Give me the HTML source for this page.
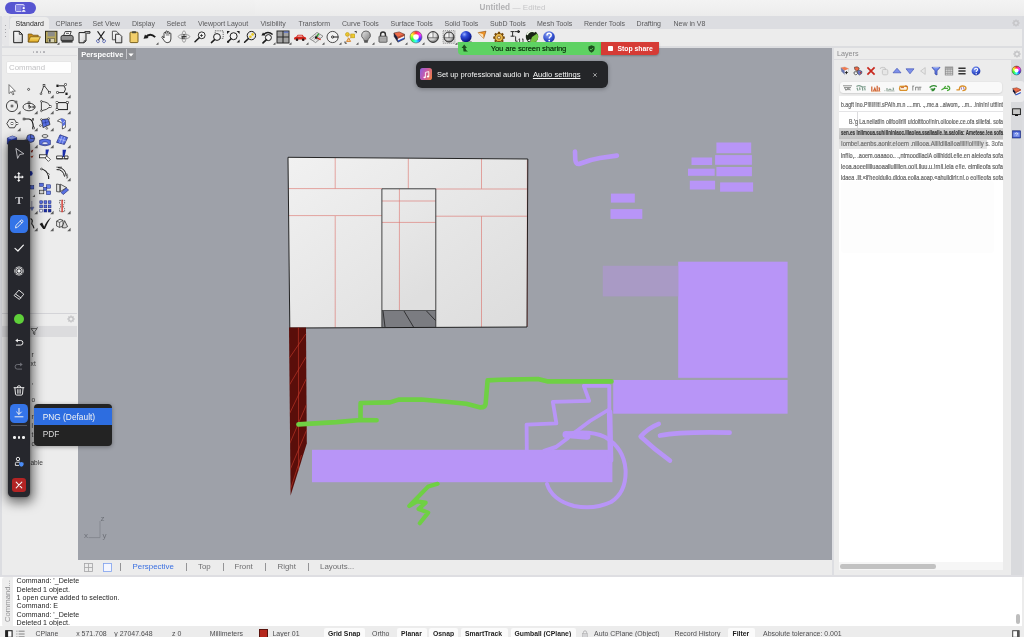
<!DOCTYPE html>
<html>
<head>
<meta charset="utf-8">
<title>Untitled</title>
<style>
html,body{margin:0;padding:0;}
body{width:1024px;height:637px;overflow:hidden;position:relative;background:#ececec;will-change:opacity;opacity:0.9999;font-family:"Liberation Sans",sans-serif;font-size:7px;color:#3a3a3a;}
.abs{position:absolute;}
.t{position:absolute;white-space:nowrap;line-height:10px;height:10px;}
svg{position:absolute;overflow:visible;}
#titlebar{left:0;top:0;width:1024px;height:16px;background:linear-gradient(#f3f3f3,#ececec);}
#tabrow{left:2px;top:16px;width:1022px;height:13px;background:#dcdde1;border-radius:4px 0 0 0;}
#toolrow{left:2px;top:29px;width:1022px;height:17px;background:#ececec;border-radius:0 0 0 4px;}
#sep1{left:0;top:46.2px;width:1024px;height:1.8px;background:#dcdde0;}
#vp{left:78px;top:48px;width:754px;height:512px;background:#9ea1a9;}
#vptabs{left:78px;top:560px;width:754px;height:15px;background:#ececec;}
#cmd{left:0;top:575px;width:1022px;height:52px;background:#fff;}
#status{left:0;top:627px;width:1024px;height:10px;background:#ececec;}
#leftp{left:2px;top:48px;width:75px;height:526px;background:#ececec;}
#rightp{left:834px;top:48px;width:176px;height:526px;background:#ececec;}
#rstrip{left:1010.5px;top:59.5px;width:13.5px;height:516px;background:#d9dadd;}
.tab{color:#5a5a5c;font-size:7px;top:18.6px;}
</style>
</head>
<body>
<div id="titlebar" class="abs"></div>
<div id="tabrow" class="abs"></div>
<div id="toolrow" class="abs"></div>
<div id="sep1" class="abs"></div>
<div id="leftp" class="abs"></div>
<div id="vp" class="abs"></div>
<div id="vptabs" class="abs"></div>
<div id="rightp" class="abs"></div>
<div id="rstrip" class="abs"></div>
<div id="cmd" class="abs"></div>
<div id="status" class="abs"></div>

<!-- TITLEBAR -->
<div class="abs" style="left:4.7px;top:2px;width:31.2px;height:12.1px;border-radius:6.05px;background:#5755d1;"></div>
<svg style="left:15px;top:4px" width="12" height="8" viewBox="0 0 12 8"><rect x="0.5" y="0.5" width="8.6" height="7" rx="1" fill="#817fe2" stroke="#dddcff" stroke-width="0.9"/><rect x="6.4" y="2.4" width="5" height="5.6" fill="#5755d1"/><circle cx="8.7" cy="4.1" r="1.2" fill="#fff"/><path d="M6.8 7.8 Q7 5.9 8.7 5.9 Q10.5 5.9 10.7 7.8Z" fill="#fff"/></svg>
<span class="t" style="left:479.6px;top:3.4px;font-size:8.2px;font-weight:bold;color:#b2b2b4;">Untitled</span>
<span class="t" style="left:512.6px;top:3.4px;font-size:8px;color:#c6c6c8;">— Edited</span>

<!-- TABS -->
<div class="abs" style="left:2px;top:16.4px;width:7.2px;height:29.8px;background:#e6e6e8;border-radius:4px 0 0 4px;"></div>
<div class="abs" style="left:5px;top:25px;width:1.2px;height:12.2px;background:repeating-linear-gradient(#a9a9ad 0 1.2px,transparent 1.2px 3.6px);"></div>
<div class="abs" style="left:10px;top:17px;width:39px;height:13px;background:#ececec;border-radius:4px 4px 0 0;"></div>
<span class="t tab" style="left:15.5px;color:#2a2a2a;">Standard</span>
<span class="t tab" style="left:55.5px;">CPlanes</span>
<span class="t tab" style="left:92.5px;">Set View</span>
<span class="t tab" style="left:132px;">Display</span>
<span class="t tab" style="left:166.5px;">Select</span>
<span class="t tab" style="left:198px;">Viewport Layout</span>
<span class="t tab" style="left:260.5px;">Visibility</span>
<span class="t tab" style="left:298.5px;">Transform</span>
<span class="t tab" style="left:342px;">Curve Tools</span>
<span class="t tab" style="left:390.5px;">Surface Tools</span>
<span class="t tab" style="left:444.5px;">Solid Tools</span>
<span class="t tab" style="left:490px;">SubD Tools</span>
<span class="t tab" style="left:537px;">Mesh Tools</span>
<span class="t tab" style="left:584px;">Render Tools</span>
<span class="t tab" style="left:636.5px;">Drafting</span>
<span class="t tab" style="left:673.5px;">New in V8</span>

<div class="abs" style="left:1022.2px;top:16px;width:1.8px;height:560px;background:#dbdce0;"></div>
<svg style="left:1012.4px;top:18.6px" width="8" height="8" viewBox="0 0 8 8"><path d="M7.60 4.00 L6.20 4.00" stroke="#c4c4c7" stroke-width="1.3"/><path d="M6.55 6.55 L5.56 5.56" stroke="#c4c4c7" stroke-width="1.3"/><path d="M4.00 7.60 L4.00 6.20" stroke="#c4c4c7" stroke-width="1.3"/><path d="M1.45 6.55 L2.44 5.56" stroke="#c4c4c7" stroke-width="1.3"/><path d="M0.40 4.00 L1.80 4.00" stroke="#c4c4c7" stroke-width="1.3"/><path d="M1.45 1.45 L2.44 2.44" stroke="#c4c4c7" stroke-width="1.3"/><path d="M4.00 0.40 L4.00 1.80" stroke="#c4c4c7" stroke-width="1.3"/><path d="M6.55 1.45 L5.56 2.44" stroke="#c4c4c7" stroke-width="1.3"/><circle cx="4" cy="4" r="2.1" fill="none" stroke="#c4c4c7" stroke-width="1.1"/></svg>
<div class="abs" style="left:832px;top:48px;width:2px;height:528px;background:#dddee2;"></div>
<div class="abs" style="left:0;top:574.6px;width:1024px;height:2.2px;background:#dedee2;"></div>
<div class="abs" style="left:0;top:16px;width:2px;height:560px;background:#dcdde1;"></div>
<svg width="0" height="0" style="position:absolute"><defs>
<linearGradient id="gpage" x1="0" y1="0" x2="1" y2="1"><stop offset="0" stop-color="#ffffff"/><stop offset="1" stop-color="#cfcfcf"/></linearGradient>
<linearGradient id="gfold" x1="0" y1="0" x2="0" y2="1"><stop offset="0" stop-color="#fbe27a"/><stop offset="1" stop-color="#e0a920"/></linearGradient>
<radialGradient id="gblue" cx="0.35" cy="0.3" r="0.8"><stop offset="0" stop-color="#9ab0ff"/><stop offset="0.3" stop-color="#2f4cd8"/><stop offset="0.75" stop-color="#0f1f9a"/><stop offset="1" stop-color="#040c48"/></radialGradient>
<radialGradient id="gwhite" cx="0.4" cy="0.35" r="0.8"><stop offset="0" stop-color="#ffffff"/><stop offset="0.5" stop-color="#d2d2d2"/><stop offset="1" stop-color="#3c3c3c"/></radialGradient>
<radialGradient id="ghelp" cx="0.4" cy="0.3" r="0.8"><stop offset="0" stop-color="#8aa2f2"/><stop offset="0.6" stop-color="#3350cf"/><stop offset="1" stop-color="#1a2c8a"/></radialGradient>
<linearGradient id="gbulb" x1="0" y1="0" x2="1" y2="1"><stop offset="0" stop-color="#e8e8e8"/><stop offset="1" stop-color="#7c7c7c"/></linearGradient>
</defs></svg>
<svg style="left:9.5px;top:29.3px" width="16" height="16" viewBox="0 0 16 16"><path d="M3.7 2.3 h5.6 l3 3 v8.4 h-8.6z" fill="url(#gpage)" stroke="#1c1c1c" stroke-width="1"/><path d="M9.3 2.3 v3 h3" fill="none" stroke="#1c1c1c" stroke-width="0.8"/></svg>
<svg style="left:26.1px;top:29.3px" width="16" height="16" viewBox="0 0 16 16"><path d="M2.2 5 h3.6 l1 1.2 h5.4 v6.8 h-10z" fill="#c9901a" stroke="#6b4a08" stroke-width="0.7"/><path d="M2.2 13 l2.2-5.2 h10 l-2.4 5.2z" fill="url(#gfold)" stroke="#6b4a08" stroke-width="0.7"/></svg>
<svg style="left:42.7px;top:29.3px" width="16" height="16" viewBox="0 0 16 16"><rect x="2.5" y="2.3" width="11.4" height="11.4" fill="#b8a85c" stroke="#2e2a18" stroke-width="1"/><rect x="4.6" y="2.8" width="7.2" height="4.6" fill="#8d8d88"/><rect x="5" y="9.4" width="6.4" height="4" fill="#d9d3b0" stroke="#5b5538" stroke-width="0.6"/><rect x="6" y="10.2" width="1.6" height="2.6" fill="#3a3a3a"/><path d="M16.5 13.2 v2.6 h-2.6z" fill="#555"/></svg>
<svg style="left:59.3px;top:29.3px" width="16" height="16" viewBox="0 0 16 16"><path d="M4.6 6.5 l1.6-4 h6 l-1.4 4z" fill="#fff" stroke="#1c1c1c" stroke-width="0.8"/><path d="M2 8.2 q0-1.8 2-1.8 h8 q2.2 0 2.2 1.8 v3.2 h-12.2z" fill="#8e8e8e" stroke="#1c1c1c" stroke-width="0.8"/><rect x="2.6" y="11.2" width="11" height="2.4" fill="#3c3c3c"/><rect x="7" y="3.8" width="3" height="1" fill="#555"/></svg>
<svg style="left:75.9px;top:29.3px" width="16" height="16" viewBox="0 0 16 16"><path d="M3 3.6 h7 v8.2 l-2 2 h-5z" fill="url(#gpage)" stroke="#1c1c1c" stroke-width="1"/><path d="M8 13.8 v-2 h2" fill="none" stroke="#1c1c1c" stroke-width="0.7"/><path d="M8.5 2.6 h5.5 v1.6 h-3.6" fill="#ddd" stroke="#1c1c1c" stroke-width="0.9"/></svg>
<svg style="left:92.5px;top:29.3px" width="16" height="16" viewBox="0 0 16 16"><path d="M4.8 2.6 L10.4 10.8 M11.2 2.6 L5.6 10.8" stroke="#1c1c1c" stroke-width="1.1" stroke-linecap="round"/><ellipse cx="4.9" cy="12.2" rx="1.3" ry="1.6" transform="rotate(-30 4.9 12.2)" fill="none" stroke="#4a5aa8" stroke-width="0.8"/><ellipse cx="11.1" cy="12.2" rx="1.3" ry="1.6" transform="rotate(30 11.1 12.2)" fill="none" stroke="#4a5aa8" stroke-width="0.8"/></svg>
<svg style="left:109.1px;top:29.3px" width="16" height="16" viewBox="0 0 16 16"><path d="M3.4 2.2 h4 l2 2 v6.6 h-6z" fill="url(#gpage)" stroke="#444" stroke-width="0.9"/><path d="M6.6 5.2 h4 l2.2 2.2 v6.4 h-6.2z" fill="url(#gpage)" stroke="#1c1c1c" stroke-width="0.9"/></svg>
<svg style="left:125.7px;top:29.3px" width="16" height="16" viewBox="0 0 16 16"><rect x="4" y="3.2" width="8" height="10.4" rx="0.8" fill="#f3cf6b" stroke="#6b5210" stroke-width="0.9"/><rect x="6" y="2.2" width="4" height="2" rx="0.5" fill="#4a4a3a"/></svg>
<svg style="left:142.3px;top:29.3px" width="16" height="16" viewBox="0 0 16 16"><path d="M3.4 8.6 Q8 3 13.2 8.2" fill="none" stroke="#1c1c1c" stroke-width="1.9"/><path d="M1.6 9.8 l5-0.8 l-3.6-3.6z" fill="#1c1c1c"/><path d="M16.5 13.2 v2.6 h-2.6z" fill="#555"/></svg>
<svg style="left:158.9px;top:29.3px" width="16" height="16" viewBox="0 0 16 16"><path d="M5 9 V4.4 q0-1 .9-1 q.8 0 .8 1 V3 q0-1 .9-1 t.9 1 v.6 q0-.9.9-.9 t.9.9 v1.2 q0-.8.8-.8 t.8.8 V10 q0 3.6-3 3.6 h-1 q-1.6 0-2.6-1.8 L3 8.6 q-.4-.9.4-1.2 q.7-.2 1.1.6z" fill="#f6f6f6" stroke="#1c1c1c" stroke-width="0.8"/><path d="M6.8 3.4 h3.6 v3.4 h-3.6z" fill="#8c8c8c" opacity="0.7"/></svg>
<svg style="left:175.5px;top:29.3px" width="16" height="16" viewBox="0 0 16 16"><ellipse cx="8" cy="7.6" rx="5.8" ry="2.2" fill="#f2f2f2" stroke="#8a8a8a" stroke-width="0.8"/><ellipse cx="8" cy="7.6" rx="2.1" ry="5.8" fill="none" stroke="#8a8a8a" stroke-width="0.8"/><path d="M8 5 v5.2 M5.6 7.6 h4.8" stroke="#1c1c1c" stroke-width="0.9"/><circle cx="6.4" cy="9" r="0.8" fill="#1c1c1c"/></svg>
<svg style="left:192.1px;top:29.3px" width="16" height="16" viewBox="0 0 16 16"><circle cx="9.7" cy="6.3" r="3.4" fill="#f4f4f4" stroke="#1c1c1c" stroke-width="0.9"/><path d="M7.2 8.8 L3 12.8" stroke="#1c1c1c" stroke-width="1.5" stroke-linecap="round"/><path d="M8 6.5 h3 M9.5 5 v3" stroke="#1c1c1c" stroke-width="0.7"/></svg>
<svg style="left:208.7px;top:29.3px" width="16" height="16" viewBox="0 0 16 16"><rect x="6.2" y="1.8" width="8" height="7.6" fill="none" stroke="#444" stroke-width="0.8" stroke-dasharray="1.2 1"/><circle cx="8" cy="8" r="3.4" fill="#f4f4f4" stroke="#1c1c1c" stroke-width="1"/><path d="M5.6 10.6 L2.4 13.6" stroke="#1c1c1c" stroke-width="1.5" stroke-linecap="round"/></svg>
<svg style="left:225.3px;top:29.3px" width="16" height="16" viewBox="0 0 16 16"><circle cx="8.6" cy="7.2" r="3.5" fill="#f4f4f4" stroke="#1c1c1c" stroke-width="1"/><path d="M6 9.8 L3.2 12.6" stroke="#1c1c1c" stroke-width="1.5" stroke-linecap="round"/><path d="M2 2 h3 l-3 3z M14.6 2 v3 l-3-3z M14.6 13.6 h-3 l3-3z M2 13.8 v-2.4 l2.4 2.4z" fill="#1c1c1c"/></svg>
<svg style="left:241.9px;top:29.3px" width="16" height="16" viewBox="0 0 16 16"><circle cx="9.4" cy="6.6" r="4.2" fill="#e9e9e9" stroke="#1c1c1c" stroke-width="1"/><path d="M6.4 9.6 L2.6 13.2" stroke="#1c1c1c" stroke-width="1.5" stroke-linecap="round"/><circle cx="8.4" cy="7.8" r="1.3" fill="#e9c91f"/><circle cx="10.6" cy="5.4" r="1.3" fill="#e9c91f"/></svg>
<svg style="left:258.5px;top:29.3px" width="16" height="16" viewBox="0 0 16 16"><circle cx="9.4" cy="8.6" r="3" fill="#f4f4f4" stroke="#1c1c1c" stroke-width="1"/><path d="M7.2 10.8 L4 13.8" stroke="#1c1c1c" stroke-width="1.7" stroke-linecap="round"/><path d="M4.6 5.4 Q9 1.4 13.6 5.6" fill="none" stroke="#1c1c1c" stroke-width="1.4"/><path d="M2.4 6.6 l4.2-.2 l-2.6-3z" fill="#1c1c1c"/><path d="M16.5 13.2 v2.6 h-2.6z" fill="#555"/></svg>
<svg style="left:275.1px;top:29.3px" width="16" height="16" viewBox="0 0 16 16"><rect x="2" y="2" width="12" height="12" fill="#a2a2a2" stroke="#2a2a2a" stroke-width="1"/><path d="M8 2 v12 M2 8 h12" stroke="#2a2a2a" stroke-width="1.1"/><rect x="8.8" y="2.6" width="4.6" height="1" fill="#4868d8"/><path d="M16.5 13.2 v2.6 h-2.6z" fill="#555"/></svg>
<svg style="left:291.7px;top:29.3px" width="16" height="16" viewBox="0 0 16 16"><path d="M2 9.6 q0-1.6 2.2-1.8 l1.6-2 h4.6 l1.6 2 q2.2.2 2.2 1.8 v1 h-12.2z" fill="#d3251c"/><path d="M6.2 6.4 h3.6 l1 1.4 h-5.6z" fill="#f2b8b3"/><circle cx="5" cy="10.8" r="1.3" fill="#2a1a1a"/><circle cx="11.2" cy="10.8" r="1.3" fill="#2a1a1a"/><path d="M16.5 13.2 v2.6 h-2.6z" fill="#555"/></svg>
<svg style="left:308.3px;top:29.3px" width="16" height="16" viewBox="0 0 16 16"><path d="M1.6 9.6 L9 3.4 L15 7.2 L7.6 13.6z" fill="#e6e6e6" stroke="#6a6a6a" stroke-width="0.7"/><path d="M4.2 7.4 l6.2 4 M6.6 5.4 l6.2 4 M5.2 11.6 l7.2-6.2 M3.2 10.6 l7.4-6.2" stroke="#8a8a8a" stroke-width="0.5"/><path d="M8.2 8.4 L12.6 10.8" stroke="#d0271d" stroke-width="1.3"/><path d="M8.2 8.4 L10.8 4.6" stroke="#2ea12e" stroke-width="1.3"/><rect x="7" y="7.4" width="2.2" height="2.2" fill="#1c1c1c"/><path d="M16.5 13.2 v2.6 h-2.6z" fill="#555"/></svg>
<svg style="left:324.9px;top:29.3px" width="16" height="16" viewBox="0 0 16 16"><circle cx="7.6" cy="8" r="5.6" fill="#f2f2f2" stroke="#3a3a3a" stroke-width="0.9"/><circle cx="7.6" cy="8" r="1.1" fill="none" stroke="#1c1c1c" stroke-width="0.9"/><path d="M8.8 8 h4.6" stroke="#1c1c1c" stroke-width="1"/><path d="M16.5 13.2 v2.6 h-2.6z" fill="#555"/></svg>
<svg style="left:341.5px;top:29.3px" width="16" height="16" viewBox="0 0 16 16"><circle cx="5.4" cy="5.4" r="1.9" fill="#f0cf2a" stroke="#b89410" stroke-width="0.6"/><rect x="8.8" y="5" width="3.8" height="3.8" fill="#f0cf2a" stroke="#b89410" stroke-width="0.6"/><path d="M6.6 9 l-2 3.4 h4z" fill="#f6d9b0" stroke="#d77a1a" stroke-width="0.9"/><path d="M5.4 5.4 L10.6 7 L6.6 10.6z" fill="none" stroke="#d8a64a" stroke-width="0.6"/><path d="M12.6 2.6 l1.8-.2 l-.2 1.8 M3 12.4 v1.8 h1.8" fill="none" stroke="#1c1c1c" stroke-width="0.8"/><path d="M16.5 13.2 v2.6 h-2.6z" fill="#555"/></svg>
<svg style="left:358.1px;top:29.3px" width="16" height="16" viewBox="0 0 16 16"><path d="M8 2 a4.3 4.3 0 0 1 2.6 7.8 q-.6.6-.6 1.8 h-4 q0-1.2-.6-1.8 A4.3 4.3 0 0 1 8 2z" fill="url(#gbulb)" stroke="#4a4a4a" stroke-width="0.8"/><rect x="6.2" y="11.6" width="3.6" height="2.2" rx="0.6" fill="#555"/><path d="M16.5 13.2 v2.6 h-2.6z" fill="#555"/></svg>
<svg style="left:374.7px;top:29.3px" width="16" height="16" viewBox="0 0 16 16"><path d="M5.6 7.4 v-2 a2.4 2.4 0 0 1 4.8 0 v2" fill="none" stroke="#2e2e2e" stroke-width="1.4"/><rect x="4" y="7.2" width="8" height="6" rx="0.6" fill="#b9b9b9" stroke="#3c3c3c" stroke-width="0.8"/><path d="M4.6 9.2 h6.8 M4.6 11 h6.8" stroke="#8a8a8a" stroke-width="0.6"/><path d="M16.5 13.2 v2.6 h-2.6z" fill="#555"/></svg>
<svg style="left:391.3px;top:29.3px" width="16" height="16" viewBox="0 0 16 16"><path d="M2.9 4 L6.9 8.4 L6.9 13.2 L3.2 7.5Z" fill="#1a1a3a"/><path d="M6.9 8.4 L13.5 5.3 L13.5 7 L6.9 10.1Z" fill="#d24a2c"/><path d="M6.9 10 L13.5 6.9 L13.5 8.6 L6.9 11.7Z" fill="#f4f4f4"/><path d="M6.9 11.6 L13.5 8.5 L13.5 10.1 L6.9 13.2Z" fill="#2b4fc4"/><path d="M2.9 4 L8.2 2.9 L13.5 5.3 L6.9 8.4Z" fill="#ee6a48" stroke="#4a1a10" stroke-width="0.5"/><path d="M2.9 4 L3.2 7.5 L6.9 13.2 L13.5 10.1 V5.3" fill="none" stroke="#222" stroke-width="0.5"/><path d="M16.5 13.2 v2.6 h-2.6z" fill="#555"/></svg>
<svg style="left:407.9px;top:29.3px" width="16" height="16" viewBox="0 0 16 16"><foreignObject x="2" y="2" width="12" height="12"><div style="width:12px;height:12px;border-radius:6px;background:conic-gradient(#f33,#f3f,#33f,#3ff,#3f3,#ff3,#f33);"></div></foreignObject><circle cx="8" cy="8" r="2.8" fill="#fff"/><circle cx="8" cy="8" r="6" fill="none" stroke="#444" stroke-width="0.5"/><path d="M16.5 13.2 v2.6 h-2.6z" fill="#555"/></svg>
<svg style="left:424.5px;top:29.3px" width="16" height="16" viewBox="0 0 16 16"><circle cx="8" cy="8" r="5.4" fill="url(#gwhite)" stroke="#1c1c1c" stroke-width="0.9"/><path d="M8 2.6 v6 M2.8 8.8 h10.4" stroke="#333" stroke-width="0.6"/></svg>
<svg style="left:441.1px;top:29.3px" width="16" height="16" viewBox="0 0 16 16"><rect x="2" y="1.6" width="12" height="12.8" fill="#d4d4d4" stroke="#6a6a6a" stroke-width="0.6" stroke-dasharray="1 1"/><circle cx="8" cy="8" r="5" fill="url(#gwhite)" stroke="#1c1c1c" stroke-width="0.9"/><path d="M8 3 v6 M3 8.8 h10" stroke="#333" stroke-width="0.6"/><path d="M16.5 13.2 v2.6 h-2.6z" fill="#555"/></svg>
<svg style="left:457.7px;top:29.3px" width="16" height="16" viewBox="0 0 16 16"><ellipse cx="9" cy="13" rx="5" ry="1.4" fill="#9a9a9a"/><circle cx="8" cy="7.6" r="5.6" fill="url(#gblue)"/></svg>
<svg style="left:474.3px;top:29.3px" width="16" height="16" viewBox="0 0 16 16"><path d="M4.2 3.6 L12 2.2 L9.6 9.4z" fill="#f0962a" stroke="#8a4a08" stroke-width="0.6"/><path d="M4.2 3.6 L9 5.2 L9.6 9.4" fill="#fbe2b8"/></svg>
<svg style="left:490.9px;top:29.3px" width="16" height="16" viewBox="0 0 16 16"><circle cx="8" cy="8.6" r="4.2" fill="#e7b54a" stroke="#6a4308" stroke-width="1"/><path d="M8 2.8 v2 M8 12.4 v2 M2.2 8.6 h2 M11.8 8.6 h2 M3.9 4.5 l1.4 1.4 M10.7 11.3 l1.4 1.4 M12.1 4.5 l-1.4 1.4 M5.3 11.3 l-1.4 1.4" stroke="#7a4d0a" stroke-width="2.2"/><circle cx="8" cy="8.6" r="3.4" fill="#e7b54a"/><circle cx="8" cy="8.6" r="1.5" fill="#f4ead0" stroke="#6a4308" stroke-width="0.7"/></svg>
<svg style="left:507.5px;top:29.3px" width="16" height="16" viewBox="0 0 16 16"><path d="M2.6 2.6 h4 M2.6 7.2 h4 M4.6 2.6 v4.6 M7 2.6 h5 M10 1.4 l2 1.2 l-2 1.2z M7.6 7.4 v4.8 h2" fill="none" stroke="#1c1c1c" stroke-width="0.9"/><path d="M10.6 10.4 l1-.6 v4 M14 10.4 l1-.6 v4 M12.6 13.6 h.6" stroke="#1c1c1c" stroke-width="0.8" fill="none"/></svg>
<svg style="left:524.1px;top:29.3px" width="16" height="16" viewBox="0 0 16 16"><circle cx="8" cy="8" r="6.2" fill="#182414"/><path d="M8 8 L13 4.4 A6.2 6.2 0 0 1 12 12.8 L6 13.6z" fill="#76c442"/><path d="M3 6 A5.4 5.4 0 0 1 11 3" fill="none" stroke="#eef6e8" stroke-width="1.6"/><path d="M3.4 11.8 l3-1.8 v2.6z" fill="#f4f4f4"/></svg>
<svg style="left:540.7px;top:29.3px" width="16" height="16" viewBox="0 0 16 16"><circle cx="8" cy="8" r="5.8" fill="url(#ghelp)"/><path d="M6 6.4 q0-2.2 2.1-2.2 q2.1 0 2.1 1.9 q0 1.2-1.1 1.8 q-.9.5-.9 1.5" fill="none" stroke="#fff" stroke-width="1.5"/><circle cx="8.2" cy="11.6" r="0.9" fill="#fff"/></svg>
<div class="abs" style="left:2px;top:48px;width:75px;height:7px;background:#ececec;border-bottom:1px solid #dedee0;border-radius:3px 3px 0 0;"></div>
<div class="abs" style="left:32.5px;top:51.1px;width:1.6px;height:1.6px;border-radius:0.5px;background:#b2b2b6;"></div>
<div class="abs" style="left:36.1px;top:51.1px;width:1.6px;height:1.6px;border-radius:0.5px;background:#b2b2b6;"></div>
<div class="abs" style="left:39.7px;top:51.1px;width:1.6px;height:1.6px;border-radius:0.5px;background:#b2b2b6;"></div>
<div class="abs" style="left:43.3px;top:51.1px;width:1.6px;height:1.6px;border-radius:0.5px;background:#b2b2b6;"></div>
<div class="abs" style="left:7px;top:62.2px;width:64px;height:10.7px;background:#fff;border-radius:0.8px;box-shadow:0 0 0 0.5px #e0e0e0;"></div>
<span class="t" style="left:9px;top:62.7px;font-size:7.8px;color:#c2c2c4;">Command</span>
<svg style="left:4.0px;top:81.7px" width="16" height="16" viewBox="0 0 16 16"><path d="M5 2.6 V11.6 L7.2 9.6 L8.8 12.8 L10 12.2 L8.4 9.2 H11.4Z" fill="#fff" stroke="#555" stroke-width="0.8"/></svg>
<svg style="left:21.0px;top:81.7px" width="16" height="16" viewBox="0 0 16 16"><circle cx="7.6" cy="7.4" r="1" fill="#fff" stroke="#1c1c1c" stroke-width="0.7"/></svg>
<svg style="left:36.8px;top:81.7px" width="16" height="16" viewBox="0 0 16 16"><path d="M4 11.6 L7 3.4 L12.4 10.2" fill="none" stroke="#1c1c1c" stroke-width="0.8"/><circle cx="4" cy="11.8" r="0.9" fill="#fff" stroke="#1c1c1c" stroke-width="0.6"/><rect x="6.1" y="2.5" width="1.8" height="1.8" fill="#fff" stroke="#1c1c1c" stroke-width="0.6"/><rect x="11.5" y="9.299999999999999" width="1.8" height="1.8" fill="#fff" stroke="#1c1c1c" stroke-width="0.6"/><path d="M16.6 12.8 v3.4 h-3.4z" fill="#5c5c5c"/></svg>
<svg style="left:54.0px;top:81.7px" width="16" height="16" viewBox="0 0 16 16"><path d="M3.6 3.8 H10 Q13 7 10 10.6 H3.6" fill="none" stroke="#1c1c1c" stroke-width="0.9"/><rect x="2.7" y="2.9" width="1.8" height="1.8" fill="#fff" stroke="#1c1c1c" stroke-width="0.6"/><rect x="2.7" y="9.7" width="1.8" height="1.8" fill="#fff" stroke="#1c1c1c" stroke-width="0.6"/><rect x="10.7" y="1.7000000000000002" width="1.8" height="1.8" fill="#fff" stroke="#1c1c1c" stroke-width="0.6"/><rect x="11.7" y="10.9" width="1.8" height="1.8" fill="#fff" stroke="#1c1c1c" stroke-width="0.6"/><path d="M16.6 12.8 v3.4 h-3.4z" fill="#5c5c5c"/></svg>
<svg style="left:4.0px;top:98.3px" width="16" height="16" viewBox="0 0 16 16"><circle cx="8" cy="8" r="5.6" fill="none" stroke="#1c1c1c" stroke-width="0.8"/><rect x="7.1" y="7.1" width="1.8" height="1.8" fill="#fff" stroke="#1c1c1c" stroke-width="0.6"/><rect x="11.1" y="3.1" width="1.8" height="1.8" fill="#fff" stroke="#1c1c1c" stroke-width="0.6"/><path d="M16.6 12.8 v3.4 h-3.4z" fill="#5c5c5c"/></svg>
<svg style="left:21.0px;top:98.3px" width="16" height="16" viewBox="0 0 16 16"><ellipse cx="8" cy="9" rx="6" ry="3.8" fill="none" stroke="#1c1c1c" stroke-width="0.8"/><path d="M8 4.6 V9 H12.6 M8 7 l2 2 l-2 1.6z" fill="none" stroke="#1c1c1c" stroke-width="0.6"/><rect x="7.1" y="3.9" width="1.8" height="1.8" fill="#fff" stroke="#1c1c1c" stroke-width="0.6"/><rect x="12.1" y="8.1" width="1.8" height="1.8" fill="#fff" stroke="#1c1c1c" stroke-width="0.6"/><path d="M16.6 12.8 v3.4 h-3.4z" fill="#5c5c5c"/></svg>
<svg style="left:36.8px;top:98.3px" width="16" height="16" viewBox="0 0 16 16"><path d="M4.4 3.4 Q12 4 13.2 8.6 Q10 12 4.4 12.8Z" fill="none" stroke="#1c1c1c" stroke-width="0.8"/><circle cx="4.4" cy="3.4" r="0.9" fill="#fff" stroke="#1c1c1c" stroke-width="0.6"/><circle cx="4.4" cy="12.8" r="0.9" fill="#fff" stroke="#1c1c1c" stroke-width="0.6"/><rect x="12.299999999999999" y="7.699999999999999" width="1.8" height="1.8" fill="#fff" stroke="#1c1c1c" stroke-width="0.6"/><path d="M16.6 12.8 v3.4 h-3.4z" fill="#5c5c5c"/></svg>
<svg style="left:54.0px;top:98.3px" width="16" height="16" viewBox="0 0 16 16"><rect x="3" y="4.6" width="10.4" height="7" fill="none" stroke="#1c1c1c" stroke-width="1"/><rect x="2.1" y="3.6999999999999997" width="1.8" height="1.8" fill="#fff" stroke="#1c1c1c" stroke-width="0.6"/><rect x="12.5" y="3.6999999999999997" width="1.8" height="1.8" fill="#fff" stroke="#1c1c1c" stroke-width="0.6"/><rect x="2.1" y="10.7" width="1.8" height="1.8" fill="#fff" stroke="#1c1c1c" stroke-width="0.6"/><path d="M16.6 12.8 v3.4 h-3.4z" fill="#5c5c5c"/></svg>
<svg style="left:4.0px;top:114.9px" width="16" height="16" viewBox="0 0 16 16"><path d="M2.8 8.6 L5.4 4.4 H10.4 L13 8.6 L10.4 12.8 H5.4Z" fill="none" stroke="#1c1c1c" stroke-width="0.8"/><rect x="7.1" y="7.699999999999999" width="1.8" height="1.8" fill="#fff" stroke="#1c1c1c" stroke-width="0.6"/><rect x="12.1" y="7.699999999999999" width="1.8" height="1.8" fill="#fff" stroke="#1c1c1c" stroke-width="0.6"/><path d="M16.6 12.8 v3.4 h-3.4z" fill="#5c5c5c"/></svg>
<svg style="left:21.0px;top:114.9px" width="16" height="16" viewBox="0 0 16 16"><path d="M3 4 H8 Q12.2 4.4 12.4 13" fill="none" stroke="#1c1c1c" stroke-width="1.2"/><rect x="2.1" y="3.1" width="1.8" height="1.8" fill="#fff" stroke="#1c1c1c" stroke-width="0.6"/><rect x="11.5" y="12.1" width="1.8" height="1.8" fill="#fff" stroke="#1c1c1c" stroke-width="0.6"/><rect x="11.3" y="3.7" width="1.4" height="1.4" fill="#fff" stroke="#1c1c1c" stroke-width="0.6"/><path d="M16.6 12.8 v3.4 h-3.4z" fill="#5c5c5c"/></svg>
<svg style="left:36.8px;top:114.9px" width="16" height="16" viewBox="0 0 16 16"><path d="M4.4 4.6 L11.4 3.8 L13 9.6 L6 12.6Z" fill="#5870e2" stroke="#1c1c1c" stroke-width="0.7"/><path d="M7.8 4.2 L9.4 11.2 M5 8.4 L12.2 6.6" stroke="#1a2a80" stroke-width="0.5"/><circle cx="4.4" cy="4.6" r="0.9" fill="#fff" stroke="#1c1c1c" stroke-width="0.6"/><circle cx="11.6" cy="3.6" r="0.9" fill="#fff" stroke="#1c1c1c" stroke-width="0.6"/><circle cx="3.4" cy="10.6" r="0.9" fill="#fff" stroke="#1c1c1c" stroke-width="0.6"/><circle cx="9.8" cy="13.4" r="0.9" fill="#fff" stroke="#1c1c1c" stroke-width="0.6"/><path d="M16.6 12.8 v3.4 h-3.4z" fill="#5c5c5c"/></svg>
<svg style="left:54.0px;top:114.9px" width="16" height="16" viewBox="0 0 16 16"><path d="M3.4 6 Q7 2.2 11.4 5.4 V12.4 L8.4 14 V8.4Q6 6.4 3.4 6Z" fill="#fff" stroke="#1c1c1c" stroke-width="0.7"/><path d="M8.4 8.4 Q10 6 11.4 5.4 Q9 3 6.4 3.8 Z" fill="#5870e2"/><path d="M8.4 8.6 L11.4 6 V9.6 L8.4 11.6Z" fill="#5870e2"/><path d="M16.6 12.8 v3.4 h-3.4z" fill="#5c5c5c"/></svg>
<svg style="left:4.0px;top:131.5px" width="16" height="16" viewBox="0 0 16 16"><path d="M3.4 6 L8.4 4 L12.6 5.6 V11.6 L7.6 13.8 L3.4 12Z" fill="#2a3fb8" stroke="#0d1660" stroke-width="0.6"/><path d="M3.4 6 L8.4 4 L12.6 5.6 L7.6 7.6Z" fill="#8fa0f0"/><path d="M16.6 12.8 v3.4 h-3.4z" fill="#5c5c5c"/></svg>
<svg style="left:21.0px;top:131.5px" width="16" height="16" viewBox="0 0 16 16"><circle cx="9.6" cy="6.4" r="4" fill="#5870e2" stroke="#1c1c1c" stroke-width="0.6"/><circle cx="5" cy="10.4" r="2.6" fill="#5870e2" stroke="#1c1c1c" stroke-width="0.6"/><path d="M9.6 2.4 V6.6 H13.6" stroke="#111" stroke-width="0.5" fill="none"/><path d="M16.6 12.8 v3.4 h-3.4z" fill="#5c5c5c"/></svg>
<svg style="left:36.8px;top:131.5px" width="16" height="16" viewBox="0 0 16 16"><path d="M2.6 8.2 Q8 5.6 13.4 8.2 V12.6 Q8 15 2.6 12.6Z" fill="#5870e2" stroke="#16206a" stroke-width="0.6"/><ellipse cx="8" cy="11.2" rx="3" ry="1.3" fill="#e8ecff" stroke="#16206a" stroke-width="0.5"/><ellipse cx="8" cy="4" rx="3" ry="1.4" fill="#f4f4f4" stroke="#1c1c1c" stroke-width="0.7"/><path d="M16.6 12.8 v3.4 h-3.4z" fill="#5c5c5c"/></svg>
<svg style="left:54.0px;top:131.5px" width="16" height="16" viewBox="0 0 16 16"><path d="M6 2.8 L13.6 5.6 L10.4 12.4 L2.6 10.4Z" fill="#5870e2" stroke="#16206a" stroke-width="0.7"/><path d="M4.4 6.8 L12 9 M8.2 3.8 L5.6 11 M10.8 4.8 L8.2 11.8" stroke="#c8d0ff" stroke-width="0.6"/><path d="M16.6 12.8 v3.4 h-3.4z" fill="#5c5c5c"/></svg>
<svg style="left:36.8px;top:148.1px" width="16" height="16" viewBox="0 0 16 16"><path d="M8.6 1.6 H12 L10 8.4 H8.6Z" fill="#1b2ea8"/><rect x="2.4" y="6.8" width="7.4" height="3" fill="#fff" stroke="#1c1c1c" stroke-width="0.8"/><path d="M9.6 8 L13.4 11.4 L11.4 13.4 L8.2 10Z" fill="#fff" stroke="#1c1c1c" stroke-width="0.7"/></svg>
<svg style="left:54.0px;top:148.1px" width="16" height="16" viewBox="0 0 16 16"><path d="M8.6 1.8 H12.2 L10.4 9 H8.6Z" fill="#1b2ea8"/><path d="M2.6 8 H8.4 V10.8 H2.6Z M10.6 8 H14 V10.8 H10.6Z" fill="#fff" stroke="#1c1c1c" stroke-width="0.8"/><path d="M2.6 10.8 H14" stroke="#1c1c1c" stroke-width="0.8"/></svg>
<svg style="left:36.8px;top:164.7px" width="16" height="16" viewBox="0 0 16 16"><path d="M3.4 4 Q10 4.4 11.6 11.6" fill="none" stroke="#1c1c1c" stroke-width="1.1"/><circle cx="4.6" cy="4" r="0.9" fill="#fff" stroke="#1c1c1c" stroke-width="0.6"/><circle cx="11.4" cy="9.4" r="0.9" fill="#fff" stroke="#1c1c1c" stroke-width="0.6"/><path d="M11.6 11 v3" stroke="#1c1c1c" stroke-width="1.2"/></svg>
<svg style="left:54.0px;top:164.7px" width="16" height="16" viewBox="0 0 16 16"><path d="M2.6 4.6 Q9 4 10.6 11.6 M4 2.6 Q11.4 2.6 12.4 11.4" fill="none" stroke="#1c1c1c" stroke-width="1"/><path d="M2.4 2.2 H8" stroke="#1c1c1c" stroke-width="0.7"/><path d="M12.8 8.4 Q14 10 13.6 13 H12" fill="none" stroke="#333" stroke-width="0.6"/><path d="M16.6 12.8 v3.4 h-3.4z" fill="#5c5c5c"/></svg>
<svg style="left:36.8px;top:181.3px" width="16" height="16" viewBox="0 0 16 16"><rect x="2.6" y="2.2" width="3.8" height="3.2" fill="#5870e2" stroke="#16206a" stroke-width="0.5"/><rect x="9.4" y="3.8" width="4.2" height="3.4" fill="#6a84ee" stroke="#16206a" stroke-width="0.5"/><rect x="6.6" y="6.4" width="3.2" height="2.8" fill="#5870e2" stroke="#16206a" stroke-width="0.5"/><rect x="2.6" y="9.2" width="4.2" height="3.6" fill="#d8d8d8" stroke="#1c1c1c" stroke-width="0.6"/><rect x="9.4" y="10" width="4.2" height="3.6" fill="#6a84ee" stroke="#16206a" stroke-width="0.5"/></svg>
<svg style="left:54.0px;top:181.3px" width="16" height="16" viewBox="0 0 16 16"><path d="M2.6 3 L5.8 3.6 V11 L2.6 10.6Z" fill="#e4e4e4" stroke="#1c1c1c" stroke-width="0.7"/><path d="M6.4 3.2 L12.6 6.6 L6.4 10.6Z" fill="#e4e4e4" stroke="#1c1c1c" stroke-width="0.7"/><path d="M12.2 7 L14.6 9 L9.2 13.6 L7 11.4Z" fill="#5870e2" stroke="#16206a" stroke-width="0.6"/></svg>
<svg style="left:36.8px;top:197.9px" width="16" height="16" viewBox="0 0 16 16"><rect x="2.8" y="2.8" width="2.8" height="2.8" fill="#5870e2" stroke="#16206a" stroke-width="0.5"/><rect x="7.0" y="2.8" width="2.8" height="2.8" fill="#5870e2" stroke="#16206a" stroke-width="0.5"/><rect x="11.2" y="2.8" width="2.8" height="2.8" fill="#5870e2" stroke="#16206a" stroke-width="0.5"/><rect x="2.8" y="7.0" width="2.8" height="2.8" fill="#5870e2" stroke="#16206a" stroke-width="0.5"/><rect x="7.0" y="7.0" width="2.8" height="2.8" fill="#5870e2" stroke="#16206a" stroke-width="0.5"/><rect x="11.2" y="7.0" width="2.8" height="2.8" fill="#5870e2" stroke="#16206a" stroke-width="0.5"/><rect x="2.8" y="11.2" width="2.8" height="2.8" fill="#fff" stroke="#16206a" stroke-width="0.5"/><rect x="7.0" y="11.2" width="2.8" height="2.8" fill="#1b2ea8" stroke="#16206a" stroke-width="0.5"/><rect x="11.2" y="11.2" width="2.8" height="2.8" fill="#1b2ea8" stroke="#16206a" stroke-width="0.5"/><path d="M16.6 12.8 v3.4 h-3.4z" fill="#5c5c5c"/></svg>
<svg style="left:54.0px;top:197.9px" width="16" height="16" viewBox="0 0 16 16"><path d="M5.6 2.4 H10.6 V5.4 L9.6 6.6 V9.4 L10.6 10.6 V13.6 H5.6 V10.6 L6.6 9.4 V6.6 L5.6 5.4Z" fill="#ececec" stroke="#444" stroke-width="0.7" stroke-dasharray="1.4 0.8"/><path d="M8.1 1.8 V14.2" stroke="#d32a20" stroke-width="1.3"/><path d="M16.6 12.8 v3.4 h-3.4z" fill="#5c5c5c"/></svg>
<svg style="left:36.8px;top:214.5px" width="16" height="16" viewBox="0 0 16 16"><path d="M2.6 9 L5.2 7.4 L7.2 11.8 Q9.6 5.6 14 2.6 Q10.6 7.6 8 14 H6.2Z" fill="#1c1c1c"/><path d="M16.6 12.8 v3.4 h-3.4z" fill="#5c5c5c"/></svg>
<svg style="left:54.0px;top:214.5px" width="16" height="16" viewBox="0 0 16 16"><path d="M2.6 6.2 L6 4.2 L9 5.4 V10.6 L5.6 12.4 L2.6 11Z" fill="#e8e8e8" stroke="#1c1c1c" stroke-width="0.7"/><path d="M2.6 6.2 L5.6 7.4 L9 5.4 M5.6 7.4 V12.4" fill="none" stroke="#1c1c1c" stroke-width="0.6"/><path d="M10.6 5.6 L13.6 11.6 Q11.4 13.8 8 12.6Z" fill="#d4d4d4" stroke="#1c1c1c" stroke-width="0.7"/><path d="M16.6 12.8 v3.4 h-3.4z" fill="#5c5c5c"/></svg>
<svg style="left:21.0px;top:148.1px" width="16" height="16" viewBox="0 0 16 16"><path d="M9.6 3 L12.4 1.6 L11 5Z" fill="#7a1a10"/><path d="M9.4 8.4 L12.6 7.6 L11 10Z" fill="#a03018"/></svg>
<svg style="left:21.0px;top:164.7px" width="16" height="16" viewBox="0 0 16 16"><ellipse cx="9.6" cy="8.4" rx="2" ry="2.4" fill="#1b2ea8"/></svg>
<svg style="left:21.0px;top:181.3px" width="16" height="16" viewBox="0 0 16 16"><rect x="9.4" y="4.6" width="3.4" height="3.4" fill="#5870e2" stroke="#16206a" stroke-width="0.5"/><path d="M14 13.4 v2.6 h-2.6z" fill="#666"/></svg>
<svg style="left:21.0px;top:197.9px" width="16" height="16" viewBox="0 0 16 16"><path d="M10.8 3 V11 M9 9.6 L13 9 L11 12.6Z" fill="#5a70e0" stroke="#6a6a8a" stroke-width="0.6"/><path d="M16.6 12.8 v3.4 h-3.4z" fill="#5c5c5c"/></svg>
<svg style="left:21.0px;top:214.5px" width="16" height="16" viewBox="0 0 16 16"><path d="M9.6 3.6 Q12 5 11 7.4 Q10 9 12 10.6 L13 13.4" fill="none" stroke="#1c1c1c" stroke-width="1.1"/><path d="M16.6 12.8 v3.4 h-3.4z" fill="#5c5c5c"/></svg>
<div class="abs" style="left:2px;top:312.5px;width:75px;height:1px;background:#d4d4d8;"></div>
<div class="abs" style="left:2px;top:313.5px;width:75px;height:11.5px;background:#ededed;"></div>
<div class="abs" style="left:2px;top:325.6px;width:75px;height:11px;background:#dcdcde;"></div>
<div class="abs" style="left:2px;top:336.6px;width:75px;height:237.4px;background:#ececec;"></div>
<svg style="left:66.6px;top:315.2px" width="8" height="8" viewBox="0 0 8 8"><path d="M7.60 4.00 L6.20 4.00" stroke="#c2c2c4" stroke-width="1.3"/><path d="M6.55 6.55 L5.56 5.56" stroke="#c2c2c4" stroke-width="1.3"/><path d="M4.00 7.60 L4.00 6.20" stroke="#c2c2c4" stroke-width="1.3"/><path d="M1.45 6.55 L2.44 5.56" stroke="#c2c2c4" stroke-width="1.3"/><path d="M0.40 4.00 L1.80 4.00" stroke="#c2c2c4" stroke-width="1.3"/><path d="M1.45 1.45 L2.44 2.44" stroke="#c2c2c4" stroke-width="1.3"/><path d="M4.00 0.40 L4.00 1.80" stroke="#c2c2c4" stroke-width="1.3"/><path d="M6.55 1.45 L5.56 2.44" stroke="#c2c2c4" stroke-width="1.3"/><circle cx="4" cy="4" r="2.1" fill="none" stroke="#c2c2c4" stroke-width="1.1"/></svg>
<svg style="left:30px;top:326.5px" width="9" height="9" viewBox="0 0 9 9"><path d="M1 1.6 H7 L4.8 4.6 V7.6 L3.4 6.8 V4.6Z" fill="none" stroke="#444" stroke-width="0.8"/><path d="M6.6 1 l1.4-.6" stroke="#444" stroke-width="0.6"/></svg>
<span class="t" style="left:31.6px;top:350.3px;font-size:6.6px;color:#444;">r</span>
<span class="t" style="left:30.6px;top:359px;font-size:6.6px;color:#444;">xt</span>
<span class="t" style="left:31.6px;top:377px;font-size:6.6px;color:#444;">,</span>
<span class="t" style="left:31.4px;top:394.7px;font-size:6.6px;color:#444;">o</span>
<span class="t" style="left:31.6px;top:412.3px;font-size:6.6px;color:#444;">r</span>
<span class="t" style="left:31.6px;top:421px;font-size:6.6px;color:#444;">l</span>
<span class="t" style="left:31.6px;top:430px;font-size:6.6px;color:#444;">t</span>
<span class="t" style="left:31.4px;top:438.7px;font-size:6.6px;color:#444;">c</span>
<span class="t" style="left:30.4px;top:457.8px;font-size:6.6px;color:#444;">able</span>
<svg style="left:0;top:0" width="1024" height="637" viewBox="0 0 1024 637">
<defs>
<linearGradient id="gwall" x1="0" y1="0" x2="1" y2="1"><stop offset="0" stop-color="#f1f1f1"/><stop offset="1" stop-color="#dcdcdc"/></linearGradient>
<linearGradient id="gdoor" x1="0" y1="0" x2="0.3" y2="1"><stop offset="0" stop-color="#ebebeb"/><stop offset="1" stop-color="#dfdfdf"/></linearGradient>
<clipPath id="redclip"><path d="M289 327.5 L306 327.5 L306.8 443.5 L290.6 495.5Z"/></clipPath>
</defs>
<path d="M288 157.3 L527.8 159 L527 327 L435.8 327.3 L435.8 188.8 L381.9 188.8 L381.9 327.6 L289.8 328 Z" fill="url(#gwall)"/>
<path d="M381.9 188.8 H435.8 V310.5 H381.9Z" fill="url(#gdoor)"/>
<path d="M381.9 310.5 H435.8 V327.3 H381.9Z" fill="#7b7c81"/>
<path d="M383 311 L385 327 M404 311 L413.5 327 M426.5 311 L435.5 320.5" stroke="#111" stroke-width="0.7" fill="none"/>
<g stroke="#d9534a" stroke-width="0.6" fill="none" opacity="0.8"><path d="M335.2 158 V188.5 M408.3 158.5 V188.5 M481.5 158.8 V188.8 M335.2 216 V327.5 M481.5 216.3 V327"/><path d="M288.5 188.6 H381.9 M435.8 189 H527.4 M288.8 215.6 H381.9 M435.8 216.2 H527.2"/><path d="M399.4 189 V310 M382 201 H435.6 M382 222.4 H435.6"/><path d="M527.3 160 V326.5"/></g>
<path d="M288 157.3 L527.8 159 L527 327 L289.8 328 Z" fill="none" stroke="#111" stroke-width="0.9"/>
<path d="M381.9 327.6 V188.8 H435.8 V327.3" fill="none" stroke="#333" stroke-width="0.9"/>
<path d="M381.9 310.5 H435.8" stroke="#222" stroke-width="0.6"/>
<path d="M289 327.5 L306 327.5 L306.8 443.5 L290.6 495.5Z" fill="#5a0e0a"/>
<g clip-path="url(#redclip)" stroke="#c83a2c" stroke-width="0.6" fill="none"><path d="M298.4 327 L298.6 472"/><path d="M289.4 358 L305.8 334 M289.4 385 L306 357 M289.6 413.5 L306.2 379 M289.8 443.5 L306.5 404.5 M290 470 L306.7 430 M290.3 490 L301.5 455"/></g>
<rect x="312" y="449.8" width="300.4" height="32.4" fill="#b895f7"/>
<rect x="613.2" y="380" width="174.4" height="33.7" fill="#b895f7"/>
<rect x="678.2" y="261.7" width="109.4" height="116.1" fill="#b895f7"/>
<rect x="716.4" y="142.5" width="34.8" height="10.7" fill="#b895f7"/>
<rect x="691.5" y="157.5" width="20.6" height="7.5" fill="#b895f7"/>
<rect x="715.1" y="155.1" width="36.8" height="9.7" fill="#b895f7"/>
<rect x="688" y="168.7" width="26.7" height="7.1" fill="#b895f7"/>
<rect x="716.4" y="167" width="35.5" height="9.2" fill="#b895f7"/>
<rect x="689.8" y="180.7" width="25.3" height="8.8" fill="#b895f7"/>
<rect x="720.1" y="182.4" width="33.0" height="9.3" fill="#b895f7"/>
<rect x="610.9" y="193.6" width="23.9" height="9.0" fill="#b895f7"/>
<rect x="610.5" y="209.1" width="31.8" height="9.8" fill="#b895f7"/>
<rect x="602.8" y="265.8" width="75.4" height="30.6" fill="#a99ac5"/>
<path d="M575 151.5 L575.3 160 Q576 164.5 579 164 Q590 159.5 600 158 L616.9 155.6" fill="none" stroke="#b895f7" stroke-linecap="round" stroke-linejoin="round" stroke-width="4.6"/>
<path d="M526.8 450 L526.6 424.6 L556.4 423.4 L552.8 401.8 L589.2 400.8 L583.8 385.8 L609.2 385.8 L609.4 414" fill="none" stroke="#b895f7" stroke-linecap="round" stroke-linejoin="round" stroke-width="3.8"/>
<path d="M609.6 412 L610.6 460" fill="none" stroke="#b895f7" stroke-linecap="round" stroke-linejoin="round" stroke-width="5.5"/>
<path d="M609 409.5 L590 421 L574 433" fill="none" stroke="#b895f7" stroke-linecap="round" stroke-linejoin="round" stroke-width="3.6"/>
<path d="M566 434.6 L587 436.2" fill="none" stroke="#b895f7" stroke-linecap="round" stroke-linejoin="round" stroke-width="7"/>
<path d="M568 438 L556 447 L544 451" fill="none" stroke="#b895f7" stroke-linecap="round" stroke-linejoin="round" stroke-width="4"/>
<path d="M566 434 Q590 430 605 437 Q624 448 625.6 470 Q626.4 492 611 502 Q594 510 574 506 Q552 500 547 484" fill="none" stroke="#b895f7" stroke-linecap="round" stroke-linejoin="round" stroke-width="4"/>
<path d="M658.8 423.8 Q648 428 640.6 436.5 Q655 450 670 460.6" fill="none" stroke="#b895f7" stroke-linecap="round" stroke-linejoin="round" stroke-width="4.5"/>
<path d="M660 435.6 Q680 431.5 729.6 432.6" fill="none" stroke="#b895f7" stroke-linecap="round" stroke-linejoin="round" stroke-width="4.6"/>
<path d="M298.4 424.4 L336.5 422.1 L360.5 420 L376.6 420.3" fill="none" stroke="#6fd044" stroke-linecap="round" stroke-linejoin="round" stroke-width="4.6"/>
<path d="M360.5 419.5 L360.6 403 L390 402.4 L398.6 399.6 L421.2 399.5 L443.8 401.5 L466.4 403.8 L480.5 407.4 Q485 407.4 485.6 404 L487.6 380.4 L500 379.8 L538 379 L548 381.4 L611.5 381.4" fill="none" stroke="#6fd044" stroke-linecap="round" stroke-linejoin="round" stroke-width="4.6"/>
<path d="M437.6 483.8 L428.3 486.4 L409.3 506 L417 501.4 L425.6 502.6 L418.6 509 L428.2 512.6 L419.8 523.2" fill="none" stroke="#6fd044" stroke-linecap="round" stroke-linejoin="round" stroke-width="4.2"/>
<path d="M100 521 V537.6 H88.5" fill="none" stroke="#7d8087" stroke-width="0.7"/>
</svg>
<span class="t" style="left:100.5px;top:513.5px;font-size:8px;color:#6e7178;">z</span>
<span class="t" style="left:84px;top:531px;font-size:8px;color:#6e7178;">x</span>
<span class="t" style="left:102.5px;top:531px;font-size:8px;color:#6e7178;">y</span>
<div class="abs" style="left:78px;top:48px;width:57.5px;height:11.8px;background:#8e9095;"></div><div class="abs" style="left:126px;top:48.6px;width:0.8px;height:10.6px;background:#c2c3c8;"></div>
<span class="t" style="left:81.2px;top:49.5px;font-size:7.5px;font-weight:bold;color:#fff;">Perspective</span>
<svg style="left:128.2px;top:52.6px" width="6" height="4" viewBox="0 0 6 4"><path d="M0.4 0.4 h5.2 L3 3.6z" fill="#fff"/></svg>
<div class="abs" style="left:834px;top:48px;width:188px;height:11px;background:#ececec;border-bottom:1px solid #dddde0;border-radius:3px 3px 0 0;"></div>
<span class="t" style="left:837px;top:48.6px;font-size:7.2px;color:#8a8a8c;">Layers</span>
<svg style="left:1012.5px;top:49.6px" width="8" height="8" viewBox="0 0 8 8"><path d="M7.60 4.00 L6.20 4.00" stroke="#c2c2c4" stroke-width="1.3"/><path d="M6.55 6.55 L5.56 5.56" stroke="#c2c2c4" stroke-width="1.3"/><path d="M4.00 7.60 L4.00 6.20" stroke="#c2c2c4" stroke-width="1.3"/><path d="M1.45 6.55 L2.44 5.56" stroke="#c2c2c4" stroke-width="1.3"/><path d="M0.40 4.00 L1.80 4.00" stroke="#c2c2c4" stroke-width="1.3"/><path d="M1.45 1.45 L2.44 2.44" stroke="#c2c2c4" stroke-width="1.3"/><path d="M4.00 0.40 L4.00 1.80" stroke="#c2c2c4" stroke-width="1.3"/><path d="M6.55 1.45 L5.56 2.44" stroke="#c2c2c4" stroke-width="1.3"/><circle cx="4" cy="4" r="2.1" fill="none" stroke="#c2c2c4" stroke-width="1.1"/></svg>
<div class="abs" style="left:1010.5px;top:80.5px;width:13.5px;height:21.5px;background:#ebebed;border-radius:0 3px 3px 0;"></div>
<svg style="left:1011.5px;top:65.5px" width="9" height="9" viewBox="0 0 9 9"><foreignObject x="0" y="0" width="9" height="9"><div style="width:9px;height:9px;border-radius:4.5px;background:conic-gradient(#f33,#f3f,#33f,#3ff,#3f3,#ff3,#f33);"></div></foreignObject><circle cx="4.5" cy="4.5" r="2.1" fill="#fff"/><circle cx="4.5" cy="4.5" r="4.4" fill="none" stroke="#333" stroke-width="0.5"/></svg>
<svg style="left:1011.8px;top:87px" width="9.6" height="9.6" viewBox="2 2 12.5 12.5"><path d="M2.9 4 L6.9 8.4 L6.9 13.2 L3.2 7.5Z" fill="#1a1a3a"/><path d="M6.9 8.4 L13.5 5.3 L13.5 7 L6.9 10.1Z" fill="#d24a2c"/><path d="M6.9 10 L13.5 6.9 L13.5 8.6 L6.9 11.7Z" fill="#f4f4f4"/><path d="M6.9 11.6 L13.5 8.5 L13.5 10.1 L6.9 13.2Z" fill="#2b4fc4"/><path d="M2.9 4 L8.2 2.9 L13.5 5.3 L6.9 8.4Z" fill="#ee6a48" stroke="#4a1a10" stroke-width="0.5"/></svg>
<svg style="left:1011.5px;top:108px" width="9" height="9" viewBox="0 0 9 9"><rect x="0.6" y="0.8" width="7.8" height="5.8" fill="#c8c8c8" stroke="#111" stroke-width="0.9"/><rect x="3" y="6.6" width="3" height="1.4" fill="#111"/></svg>
<svg style="left:1011.5px;top:129.5px" width="9" height="9" viewBox="0 0 9 9"><rect x="0.4" y="0.8" width="8.2" height="7.2" fill="#3c55c8" stroke="#1a2878" stroke-width="0.6"/><rect x="1.4" y="2.4" width="6.2" height="4.4" fill="#7f96ee"/><path d="M3.4 3.8 q0-1 1.1-1 q1.1 0 1.1.9 q0 .6-.6.9 q-.4.2-.4.7" fill="none" stroke="#fff" stroke-width="0.7"/></svg>
<svg style="left:839.8px;top:65.9px" width="10" height="10" viewBox="0 0 10 10"><path d="M0.8 1.8 L4.8 1 L8.8 2.8 L8.2 5.6 L4.6 8.6 L1.6 5.4Z" fill="#f8f8f8" stroke="#9a9a9a" stroke-width="0.4"/><path d="M0.8 1.8 L4.8 1 L8.8 2.8 L4.6 4.6Z" fill="#ee7a50"/><path d="M0.8 1.8 L4.6 4.6 L4.6 8.6 L1.6 5.4Z" fill="#3a4a9a" opacity="0.75"/><path d="M6.4 4.8 L7.1 6.1 L8.4 6.6 L7.1 7.1 L6.4 8.6 L5.7 7.1 L4.4 6.6 L5.7 6.1Z" fill="#1c1c1c"/></svg>
<svg style="left:852.8px;top:65.9px" width="10" height="10" viewBox="0 0 10 10"><path d="M1.4 1.2 L4.2 0.8 L6.2 2 L5.8 3.8 L3.6 5 L1.8 3.6Z" fill="#ee6a48" stroke="#1c1c1c" stroke-width="0.5"/><path d="M4.6 4.8 L7 4.4 L9 5.6 L8.6 7.6 L6.4 9 L4.6 7.4Z" fill="#6a7ad8" stroke="#1c1c1c" stroke-width="0.5"/><path d="M1 6 L3.6 5.6 L4.6 7.4 L3 9 L1.2 8Z" fill="#f4f4f4" stroke="#1c1c1c" stroke-width="0.6"/><path d="M6.4 6 L8.4 5.8 L7.6 8Z" fill="#c03a2a"/></svg>
<svg style="left:866.0px;top:65.9px" width="10" height="10" viewBox="0 0 10 10"><path d="M1.4 1.4 L8.6 8.6 M8.6 1.4 L1.4 8.6" stroke="#c8281e" stroke-width="1.7"/></svg>
<svg style="left:879.2px;top:65.9px" width="10" height="10" viewBox="0 0 10 10"><path d="M1.2 3 Q1.2 1.4 2.8 1.4 H4.8 Q6.4 1.4 6.4 3 V4 M3.4 4.4 Q3.4 3.4 4.8 3.4 H7.4 Q8.8 3.4 8.8 4.8 V7.4 Q8.8 8.8 7.4 8.8 H4.8 Q3.4 8.8 3.4 7.4Z" fill="#e6e6e6" stroke="#c0c0c0" stroke-width="0.8"/></svg>
<svg style="left:892.1px;top:65.9px" width="10" height="10" viewBox="0 0 10 10"><path d="M5 2.2 L9 6.8 H1Z" fill="#7d90ea" stroke="#3346b0" stroke-width="0.6" stroke-linejoin="round"/></svg>
<svg style="left:905.1px;top:65.9px" width="10" height="10" viewBox="0 0 10 10"><path d="M5 7.8 L9 2.8 H1Z" fill="#7d90ea" stroke="#3346b0" stroke-width="0.6" stroke-linejoin="round"/></svg>
<svg style="left:918.0px;top:65.9px" width="10" height="10" viewBox="0 0 10 10"><path d="M2.6 5 L7.2 1.6 V8.4Z" fill="#e8e8e8" stroke="#bcbcbc" stroke-width="0.7"/></svg>
<svg style="left:931.3px;top:65.9px" width="10" height="10" viewBox="0 0 10 10"><path d="M1 1.4 H9 L6 4.8 V9 L4 8 V4.8Z" fill="#6a84ea" stroke="#22349a" stroke-width="0.7"/><ellipse cx="5" cy="1.6" rx="3.6" ry="0.7" fill="#a8b8f4"/></svg>
<svg style="left:943.8px;top:65.9px" width="10" height="10" viewBox="0 0 10 10"><rect x="1.2" y="1" width="7.6" height="8" fill="#ececec" stroke="#7a7a7a" stroke-width="0.7"/><path d="M1.2 3.2 H8.8 M1.2 5.2 H8.8 M1.2 7.2 H8.8" stroke="#6e6e6e" stroke-width="0.7"/><path d="M3.8 1 V9 M6.2 1 V9" stroke="#8a8a8a" stroke-width="0.5"/><rect x="1.2" y="1" width="7.6" height="1.6" fill="#9a9a9a"/></svg>
<svg style="left:957.4px;top:65.9px" width="10" height="10" viewBox="0 0 10 10"><path d="M1.4 2.2 H8.6 M1.4 5 H8.6 M1.4 7.8 H8.6" stroke="#333" stroke-width="1.4"/></svg>
<svg style="left:970.5px;top:65.9px" width="10" height="10" viewBox="0 0 10 10"><circle cx="5" cy="5" r="4.4" fill="url(#ghelp)"/><path d="M3.6 3.8 q0-1.6 1.5-1.6 q1.5 0 1.5 1.4 q0 .8-.8 1.2 q-.6.4-.6 1.1" fill="none" stroke="#fff" stroke-width="1.1"/><circle cx="5.2" cy="7.8" r="0.7" fill="#fff"/></svg>
<div class="abs" style="left:839.6px;top:81.6px;width:162.6px;height:11px;background:#f9f9f9;border-radius:3px;box-shadow:0 0.5px 1.5px rgba(0,0,0,.18);"></div>
<svg style="left:843px;top:85.3px" width="9" height="6" viewBox="0 0 9 6"><path d="M0 0.8 H9 M1 2.6 H8 M1.6 2.6 L3 5.6 M4 3.4 Q6 2.6 7.6 5 M2 4.6 H7" stroke="#8d8f8d" stroke-width="1" fill="none"/></svg>
<svg style="left:856px;top:85.3px" width="10" height="6" viewBox="0 0 10 6"><path d="M0.4 1.4 Q3 -0.2 5 1.2 T9.6 1.6 M1 2.8 L2 5.6 M3.6 2.4 L4 5.2 M6.4 2.6 L6.8 5.6 M8.6 2.8 L9.2 5.4" stroke="#7f9e8e" stroke-width="1.2" fill="none"/></svg>
<svg style="left:871px;top:84.6px" width="9.4" height="7" viewBox="0 0 9.4 7"><path d="M0.8 6.4 V1.6 M2.4 6.6 L3.8 3.2 L5 6.6 M6.2 6.4 V0.8 M7.8 6.4 Q9.2 4 7.8 2.4" stroke="#d2693a" stroke-width="1.3" fill="none"/><path d="M0 6.6 H9.4" stroke="#e8b08a" stroke-width="0.8"/></svg>
<svg style="left:883.8px;top:86.3px" width="11" height="5.4" viewBox="0 0 11 5.4"><path d="M0.6 4.6 H1.2 M3 4.8 V2 M4.4 4.6 Q6 1.6 7.4 4.6 M8.6 4.6 Q10.4 3 8.8 1.6" stroke="#8aa294" stroke-width="1.2" fill="none"/><path d="M2.4 5 H10.6" stroke="#a6b4aa" stroke-width="0.8"/></svg>
<svg style="left:898.8px;top:85px" width="9.4" height="6.6" viewBox="0 0 9.4 6.6"><path d="M1 1.4 Q0 3.4 1.2 5.4 H7.6 Q9.4 3.4 7.8 1.2Z" fill="#fbf3e4" stroke="#d9902a" stroke-width="1.2"/><path d="M6.4 0.6 L8.8 2 M2 2.6 H5" stroke="#c4562a" stroke-width="0.9"/></svg>
<svg style="left:912px;top:85.4px" width="10" height="6" viewBox="0 0 10 6"><path d="M0.8 0.6 V5.6 M0.8 1.6 L2.2 0.8 M3.6 2 V5.4 M3.6 2.2 H6 M6.2 2.2 V5.4 M8 2.2 V5.4 M6.4 2.2 H9.4" stroke="#8a8c8a" stroke-width="1" fill="none"/></svg>
<svg style="left:928.6px;top:85.2px" width="8.2" height="6.2" viewBox="0 0 8.2 6.2"><path d="M0.6 2.4 Q4 -0.6 7.8 1.6 M2.6 5.6 Q5.4 5.8 5.8 2.8 M1.6 4.2 H5" stroke="#2e8a2e" stroke-width="1.3" fill="none"/></svg>
<svg style="left:941px;top:85.2px" width="10" height="6.2" viewBox="0 0 10 6.2"><path d="M0.4 5 Q3 4.4 4.6 1 M3.2 3.4 H7 M6 5.6 Q9.4 5 8.6 2.6 Q8 0.8 6.2 1.4" stroke="#4aa83a" stroke-width="1.3" fill="none"/></svg>
<svg style="left:956px;top:85.2px" width="11" height="6.2" viewBox="0 0 11 6.2"><path d="M0.4 4.8 H3 M3.4 5.4 Q3 1.2 6 1 Q9.6 0.8 10 3 Q10 5.6 6.4 5.6" stroke="#d9902a" stroke-width="1.3" fill="none"/><path d="M5.4 2.4 V4.6 M7.4 2.2 L8.2 4.6" stroke="#8a6ab0" stroke-width="0.9"/></svg>
<div class="abs" style="left:838.8px;top:96.4px;width:164.3px;height:465.4px;background:#fff;"></div>
<div class="abs" style="left:838.8px;top:111.4px;width:164.3px;height:0.7px;background:#e4e4e6;"></div>
<div class="abs" style="left:857.4px;top:112px;width:0.6px;height:16px;background:#dcdcde;"></div>
<div class="abs" style="left:838.8px;top:128px;width:164.3px;height:10.6px;background:linear-gradient(#d2d2d2,#c4c4c4);"></div>
<div class="abs" style="left:838.8px;top:138.6px;width:164.3px;height:10px;background:linear-gradient(#dcdcdc,#e6e6e6);"></div>
<div class="abs" style="left:987px;top:139.5px;width:16px;height:9px;background:#fff;"></div>
<svg style="left:0;top:0" width="1024" height="200" viewBox="0 0 1024 200">
<text x="841" y="107.39999999999999" textLength="162" lengthAdjust="spacingAndGlyphs" font-family="Liberation Sans, sans-serif" font-size="6.3" font-weight="normal" fill="#3c3c3c" stroke="#3c3c3c" stroke-width="0.2" opacity="0.8">b.agft Ino.P!l!ll!!lt!.sPA!h.m.n ....mn. .,.me.a ..aiwom,. ..m.. .!nln!n! utt!int</text>
<text x="849" y="123.8" textLength="154" lengthAdjust="spacingAndGlyphs" font-family="Liberation Sans, sans-serif" font-size="6.3" font-weight="normal" fill="#3c3c3c" stroke="#3c3c3c" stroke-width="0.2" opacity="0.8">B.'g  La.nellatl!n ollfoollrl!l u!doltltoo!!n!n.oIlooloe.ce.ofa sillefal. sofa</text>
<text x="841" y="135.1" textLength="162" lengthAdjust="spacingAndGlyphs" font-family="Liberation Sans, sans-serif" font-size="6.3" font-weight="bold" fill="#1e1e1e" stroke="#1e1e1e" stroke-width="0.2" opacity="0.85">sen.es lnllmoua.suhillnlnlaoc.lllaolea.ssallaalle.!a.sa!olla: Ameteae.!ea sofa</text>
<text x="841" y="146.29999999999998" textLength="162" lengthAdjust="spacingAndGlyphs" font-family="Liberation Sans, sans-serif" font-size="6.3" font-weight="normal" fill="#4a4a4a" stroke="#4a4a4a" stroke-width="0.2" opacity="0.75">Iombe!.aenbs.aonlr.e!oem .nillooa.Alll!dlllal!oa!lll!!ol!!ll!y s. 3ofa</text>
<text x="841" y="157.5" textLength="162" lengthAdjust="spacingAndGlyphs" font-family="Liberation Sans, sans-serif" font-size="6.3" font-weight="normal" fill="#3c3c3c" stroke="#3c3c3c" stroke-width="0.2" opacity="0.8">lnf!lo,. .aoem.oaaaoo.. .,ntmoodllaclA olllhlddl.e!le.en aleleofa sofa</text>
<text x="841" y="168.7" textLength="162" lengthAdjust="spacingAndGlyphs" font-family="Liberation Sans, sans-serif" font-size="6.3" font-weight="normal" fill="#3c3c3c" stroke="#3c3c3c" stroke-width="0.2" opacity="0.8">leoa.aoeellllluaoaallulllllen.oo!l.lluu.u.!rn!l.lela e!!e. elmlleofa sofa</text>
<text x="841" y="179.9" textLength="162" lengthAdjust="spacingAndGlyphs" font-family="Liberation Sans, sans-serif" font-size="6.3" font-weight="normal" fill="#3c3c3c" stroke="#3c3c3c" stroke-width="0.2" opacity="0.8">ldaea .llt.«ll'heoldullo.dldoa.eolla.aoap.«ahulldlr!r.n!.o eo!!leofa sofa</text>
</svg>
<div class="abs" style="left:841px;top:181px;width:153px;height:72px;border-radius:3px;background:#fdfdfd;"></div>
<div class="abs" style="left:838.8px;top:561.8px;width:164.3px;height:8.2px;background:#f6f6f6;"></div>
<div class="abs" style="left:840.2px;top:564.2px;width:95.4px;height:4.4px;border-radius:2.2px;background:#c2c2c2;"></div>
<svg style="left:84px;top:562.6px" width="9" height="9" viewBox="0 0 9 9"><rect x="0.5" y="0.5" width="8" height="8" fill="none" stroke="#a4a4a6" stroke-width="0.8"/><path d="M4.5 0.5 V8.5 M0.5 4.5 H8.5" stroke="#a4a4a6" stroke-width="0.8"/></svg>
<svg style="left:103px;top:562.6px" width="9" height="9" viewBox="0 0 9 9"><rect x="0.5" y="0.5" width="8" height="8" fill="#f4f6ff" stroke="#7ea0ee" stroke-width="0.8"/></svg>
<div class="abs" style="left:120.10000000000001px;top:563px;width:0.7px;height:8px;background:#949496;"></div>
<div class="abs" style="left:186.29999999999998px;top:563px;width:0.7px;height:8px;background:#949496;"></div>
<div class="abs" style="left:222.7px;top:563px;width:0.7px;height:8px;background:#949496;"></div>
<div class="abs" style="left:264.7px;top:563px;width:0.7px;height:8px;background:#949496;"></div>
<div class="abs" style="left:307.7px;top:563px;width:0.7px;height:8px;background:#949496;"></div>
<span class="t" style="left:132.6px;top:562px;font-size:7.9px;color:#3a6fe0;">Perspective</span>
<span class="t" style="left:198px;top:562px;font-size:7.9px;color:#6e6e70;">Top</span>
<span class="t" style="left:234.4px;top:562px;font-size:7.9px;color:#6e6e70;">Front</span>
<span class="t" style="left:277.5px;top:562px;font-size:7.9px;color:#6e6e70;">Right</span>
<span class="t" style="left:320px;top:562px;font-size:7.9px;color:#6e6e70;">Layouts...</span>
<div class="abs" style="left:2px;top:577px;width:11px;height:50px;background:#eeeeee;border-radius:3px 0 0 3px;"></div>
<span class="t" style="left:-12.5px;top:597px;width:40px;text-align:center;font-size:7.7px;color:#929294;transform:rotate(-90deg);">Command...</span>
<span class="t" style="left:16.6px;top:576.2px;font-size:7.12px;color:#1e1e1e;">Command: '_Delete</span>
<span class="t" style="left:16.6px;top:584.6px;font-size:7.12px;color:#1e1e1e;">Deleted 1 object.</span>
<span class="t" style="left:16.6px;top:593.0px;font-size:7.12px;color:#1e1e1e;">1 open curve added to selection.</span>
<span class="t" style="left:16.6px;top:601.3px;font-size:7.12px;color:#1e1e1e;">Command: E</span>
<span class="t" style="left:16.6px;top:609.7px;font-size:7.12px;color:#1e1e1e;">Command: '_Delete</span>
<span class="t" style="left:16.6px;top:618.1px;font-size:7.12px;color:#1e1e1e;">Deleted 1 object.</span>
<div class="abs" style="left:1016px;top:614px;width:4.2px;height:10.4px;border-radius:2.1px;background:#bdbdbd;"></div>
<div class="abs" style="left:0;top:626.4px;width:1024px;height:10.6px;background:#ececec;"></div>
<svg style="left:4.6px;top:630px" width="8" height="8" viewBox="0 0 8 8"><rect x="0.7" y="0.7" width="6.4" height="6.6" fill="#fff" stroke="#222" stroke-width="1.1"/><rect x="0.7" y="0.7" width="2.4" height="6.6" fill="#222"/></svg>
<svg style="left:15.6px;top:630px" width="9" height="8" viewBox="0 0 9 8"><path d="M0.4 1.2 h1 M2.6 1.2 h6 M0.4 4 h1 M2.6 4 h6 M0.4 6.8 h1 M2.6 6.8 h6" stroke="#6a6a6a" stroke-width="0.8"/></svg>
<span class="t" style="left:35.5px;top:629px;font-size:6.95px;font-weight:normal;color:#4e4e50;">CPlane</span>
<span class="t" style="left:76.2px;top:629px;font-size:6.95px;font-weight:normal;color:#4e4e50;">x 571.708</span>
<span class="t" style="left:114.3px;top:629px;font-size:6.95px;font-weight:normal;color:#4e4e50;">y 27047.648</span>
<span class="t" style="left:172px;top:629px;font-size:6.95px;font-weight:normal;color:#4e4e50;">z 0</span>
<span class="t" style="left:209.8px;top:629px;font-size:6.95px;font-weight:normal;color:#4e4e50;">Millimeters</span>
<div class="abs" style="left:258.7px;top:628.8px;width:9.8px;height:9px;background:#b5271c;border:0.5px solid #5a120c;box-sizing:border-box;"></div>
<span class="t" style="left:272.5px;top:629px;font-size:6.95px;font-weight:normal;color:#4e4e50;">Layer 01</span>
<div class="abs" style="left:324px;top:628px;width:40.5px;height:10px;background:#fbfbfb;border-radius:2px 2px 0 0;"></div>
<span class="t" style="left:328px;top:629px;font-size:6.8px;font-weight:bold;color:#1c1c1c;">Grid Snap</span>
<span class="t" style="left:372px;top:629px;font-size:6.95px;font-weight:normal;color:#4e4e50;">Ortho</span>
<div class="abs" style="left:396.5px;top:628px;width:30.0px;height:10px;background:#fbfbfb;border-radius:2px 2px 0 0;"></div>
<span class="t" style="left:401px;top:629px;font-size:6.8px;font-weight:bold;color:#1c1c1c;">Planar</span>
<div class="abs" style="left:429px;top:628px;width:29px;height:10px;background:#fbfbfb;border-radius:2px 2px 0 0;"></div>
<span class="t" style="left:433px;top:629px;font-size:6.8px;font-weight:bold;color:#1c1c1c;">Osnap</span>
<div class="abs" style="left:460.5px;top:628px;width:47.0px;height:10px;background:#fbfbfb;border-radius:2px 2px 0 0;"></div>
<span class="t" style="left:465px;top:629px;font-size:6.8px;font-weight:bold;color:#1c1c1c;">SmartTrack</span>
<div class="abs" style="left:510.5px;top:628px;width:65.5px;height:10px;background:#fbfbfb;border-radius:2px 2px 0 0;"></div>
<span class="t" style="left:514.5px;top:629px;font-size:6.8px;font-weight:bold;color:#1c1c1c;">Gumball (CPlane)</span>
<svg style="left:582px;top:629.6px" width="6" height="8" viewBox="0 0 6 8"><path d="M1.4 3.6 V2.4 Q1.4 0.8 3 0.8 Q4.6 0.8 4.6 2.4 V3.6" fill="none" stroke="#a8a8aa" stroke-width="0.8"/><rect x="0.6" y="3.6" width="4.8" height="4" fill="#d4d4d6" stroke="#a8a8aa" stroke-width="0.5"/></svg>
<span class="t" style="left:594px;top:629px;font-size:6.95px;font-weight:normal;color:#4e4e50;">Auto CPlane (Object)</span>
<span class="t" style="left:674.5px;top:629px;font-size:6.95px;font-weight:normal;color:#4e4e50;">Record History</span>
<div class="abs" style="left:728px;top:628px;width:26.5px;height:10px;background:#fbfbfb;border-radius:2px 2px 0 0;"></div>
<span class="t" style="left:732.5px;top:629px;font-size:6.8px;font-weight:bold;color:#1c1c1c;">Filter</span>
<span class="t" style="left:763px;top:629px;font-size:6.95px;font-weight:normal;color:#4e4e50;">Absolute tolerance: 0.001</span>
<svg style="left:1011.5px;top:630px" width="8" height="8" viewBox="0 0 8 8"><rect x="0.7" y="0.7" width="6.4" height="6.6" fill="#fff" stroke="#444" stroke-width="1"/><rect x="5" y="0.7" width="2.1" height="6.6" fill="#555"/></svg>
<div class="abs" style="left:458px;top:42px;width:143px;height:13px;background:#5ed263;border-radius:0 0 0 4px;"></div>
<div class="abs" style="left:601px;top:42px;width:57.5px;height:13px;background:#d63b35;border-radius:0 0 4px 0;box-shadow:0 1px 2px rgba(0,0,0,.25);"></div>
<svg style="left:461px;top:44px" width="8" height="9" viewBox="0 0 8 9"><path d="M3.2 0.6 L6 4 H4.4 Q4.6 6.6 7 7.6 H2.6 Q2.2 6 2.2 4 H0.6Z" fill="#1d4f1e"/></svg>
<span class="t" style="left:490.8px;top:43.8px;font-size:7.37px;color:#143f15;text-shadow:0.25px 0 0 #143f15;">You are screen sharing</span>
<svg style="left:588px;top:44.5px" width="7" height="8" viewBox="0 0 7 8"><path d="M3.5 0.3 L6.6 1.4 V4 Q6.4 6.6 3.5 7.7 Q0.6 6.6 0.4 4 V1.4Z" fill="#1d4f1e"/><path d="M2 4 l1.1 1.1 l2-2.2" stroke="#5ed263" stroke-width="0.8" fill="none"/></svg>
<div class="abs" style="left:607.8px;top:46.3px;width:4.8px;height:4.8px;background:#fff;border-radius:0.8px;"></div>
<span class="t" style="left:617.4px;top:44px;font-size:6.85px;font-weight:bold;color:#fff;">Stop share</span>
<div class="abs" style="left:416px;top:60.5px;width:192px;height:27.5px;background:#242528;border-radius:6px;box-shadow:0 1px 4px rgba(0,0,0,.3);"></div>
<div class="abs" style="left:420px;top:68.3px;width:12px;height:12px;border-radius:2.6px;background:linear-gradient(110deg,#8a5fe0 0%,#c85aa8 45%,#f0803a 100%);"></div>
<svg style="left:422.5px;top:70.5px" width="7" height="8" viewBox="0 0 7 8"><path d="M2.4 6.2 V1.4 L5.8 0.6 V5.4" fill="none" stroke="#fff" stroke-width="0.9"/><ellipse cx="1.6" cy="6.3" rx="1.2" ry="0.9" fill="#fff"/><ellipse cx="5" cy="5.5" rx="1.2" ry="0.9" fill="#fff"/></svg>
<span class="t" style="left:436.9px;top:70.1px;font-size:7.49px;color:#f4f4f4;">Set up professional audio in</span>
<span class="t" style="left:532.9px;top:70.1px;font-size:7.58px;color:#f4f4f4;text-decoration:underline;">Audio settings</span>
<svg style="left:593.2px;top:72.6px" width="4" height="4" viewBox="0 0 4 4"><path d="M0.3 0.3 L3.7 3.7 M3.7 0.3 L0.3 3.7" stroke="#d0d0d0" stroke-width="0.7"/></svg>
<div class="abs" style="left:8px;top:140.4px;width:21.8px;height:356.4px;border-radius:4.5px;box-shadow:1px 3px 11px 3px rgba(0,0,0,.5), 0 0 3px rgba(0,0,0,.4);background:#26272d;"></div>
<div class="abs" style="left:9.8px;top:215px;width:18.6px;height:18.2px;border-radius:4.5px;background:#3474e8;"></div>
<div class="abs" style="left:9.8px;top:404.2px;width:18.6px;height:18.6px;border-radius:4.5px;background:#3474e8;"></div>
<div class="abs" style="left:11.2px;top:425px;width:15.6px;height:0.8px;background:#55565c;"></div>
<div class="abs" style="left:12px;top:477.8px;width:14px;height:14px;border-radius:3px;background:#b32424;"></div>
<svg style="left:11.1px;top:145.0px" width="16" height="16" viewBox="0 0 16 16"><path d="M4.9 3.4 L12.9 8.8 L8.7 9.5 L6.6 13.4Z" fill="none" stroke="#c4c4c8" stroke-width="0.9" stroke-linejoin="round"/></svg>
<svg style="left:11.1px;top:169.2px" width="16" height="16" viewBox="0 0 16 16"><path d="M7.8 4.4 V11.6 M4.2 8 H11.4" fill="none" stroke="#f2f2f2" stroke-linecap="round" stroke-linejoin="round" stroke-width="1.25"/><path d="M6.1 5 L7.8 3 L9.5 5Z M6.1 11 L7.8 13 L9.5 11Z M4.8 6.3 L2.8 8 L4.8 9.7Z M10.8 6.3 L12.8 8 L10.8 9.7Z" fill="#f2f2f2"/></svg>
<span class="t" style="left:15.2px;top:194.4px;font-family:'Liberation Serif',serif;font-weight:bold;font-size:11.4px;line-height:12px;height:12px;color:#c4c4c8;">T</span>
<svg style="left:11.1px;top:216.2px" width="16" height="16" viewBox="0 0 16 16"><path d="M4.6 11.6 L4.9 9.4 L10 4.3 Q10.8 3.6 11.6 4.4 Q12.4 5.2 11.7 6 L6.6 11.1Z M9.2 5.2 L10.8 6.8" fill="none" stroke="#f2f2f2" stroke-linecap="round" stroke-linejoin="round" stroke-width="0.9"/></svg>
<svg style="left:11.1px;top:240.2px" width="16" height="16" viewBox="0 0 16 16"><path d="M4 8.4 L6.9 11 L12.4 5.2" fill="none" stroke="#f2f2f2" stroke-linecap="round" stroke-linejoin="round" stroke-width="1.2"/></svg>
<svg style="left:11.1px;top:263.4px" width="16" height="16" viewBox="0 0 16 16"><circle cx="8" cy="8" r="1.7" fill="#f2f2f2"/><circle cx="8" cy="8" r="3.1" fill="none" stroke="#f2f2f2" stroke-width="0.9"/><path d="M5 4.6 Q8 2.6 11 4.6 M5 11.4 Q8 13.4 11 11.4 M4 6 Q3 8 4 10 M12 6 Q13 8 12 10" fill="none" stroke="#f2f2f2" stroke-linecap="round" stroke-linejoin="round" stroke-width="0.8" opacity="0.85"/></svg>
<svg style="left:11.1px;top:287.0px" width="16" height="16" viewBox="0 0 16 16"><path d="M8.2 3.4 L12.8 7.2 L8.4 12.4 L3.4 8.8Z M4.9 7.3 L9.8 10.8" fill="none" stroke="#f2f2f2" stroke-linecap="round" stroke-linejoin="round" stroke-width="0.9"/></svg>
<div class="abs" style="left:14px;top:314px;width:10px;height:10px;border-radius:5px;background:#5fd03a;"></div>
<svg style="left:11.1px;top:334.3px" width="16" height="16" viewBox="0 0 16 16"><path d="M6.4 6.5 H9.7 Q11.9 6.5 11.9 8.8 Q11.9 11.1 9.7 11.1 H5.4" fill="none" stroke="#f2f2f2" stroke-linecap="round" stroke-linejoin="round" stroke-width="0.95"/><path d="M4.3 6.5 L6.9 4.5 V8.5Z" fill="#f2f2f2"/></svg>
<svg style="left:11.1px;top:358.0px" width="16" height="16" viewBox="0 0 16 16"><path d="M9.6 6.5 H6.3 Q4.1 6.5 4.1 8.8 Q4.1 11.1 6.3 11.1 H10.6" fill="none" stroke="#707178" stroke-width="0.95" stroke-linecap="round"/><path d="M11.7 6.5 L9.1 4.5 V8.5Z" fill="#707178"/></svg>
<svg style="left:11.1px;top:381.8px" width="16" height="16" viewBox="0 0 16 16"><path d="M3 5.7 H12.9 M6.2 5.5 Q6.2 3.7 8 3.7 Q9.8 3.7 9.8 5.5 M3.9 5.9 L4.5 12 Q4.6 13.1 5.7 13.1 H10.3 Q11.4 13.1 11.5 12 L12.1 5.9" fill="none" stroke="#f2f2f2" stroke-linecap="round" stroke-linejoin="round" stroke-width="0.95"/><path d="M6.9 7.6 V11.2 M9.1 7.6 V11.2" fill="none" stroke="#f2f2f2" stroke-linecap="round" stroke-linejoin="round" stroke-width="1.1"/></svg>
<svg style="left:11.1px;top:405.4px" width="16" height="16" viewBox="0 0 16 16"><path d="M8 3.4 V9.2 M5.6 7 L8 9.4 L10.4 7 M4 11.8 H12" fill="none" stroke="#f2f2f2" stroke-linecap="round" stroke-linejoin="round" stroke-width="1"/></svg>
<div class="abs" style="left:13.2px;top:436.3px;width:2.4px;height:2.4px;border-radius:1.2px;background:#f2f2f2;"></div>
<div class="abs" style="left:17.8px;top:436.3px;width:2.4px;height:2.4px;border-radius:1.2px;background:#f2f2f2;"></div>
<div class="abs" style="left:22.3px;top:436.3px;width:2.4px;height:2.4px;border-radius:1.2px;background:#f2f2f2;"></div>
<svg style="left:11.1px;top:453.6px" width="16" height="16" viewBox="0 0 16 16"><circle cx="7" cy="5" r="1.7" fill="none" stroke="#f2f2f2" stroke-width="0.9"/><path d="M8.6 8.2 H5.6 Q4.4 8.2 4.4 9.6 V11.4 H7.6" fill="none" stroke="#f2f2f2" stroke-linecap="round" stroke-linejoin="round" stroke-width="0.9"/><path d="M10.4 8 L12.6 8.8 V10.4 Q12.4 12 10.4 12.8 Q8.4 12 8.2 10.4 V8.8Z" fill="#4a8cf6"/></svg>
<svg style="left:11.1px;top:476.8px" width="16" height="16" viewBox="0 0 16 16"><path d="M5.2 5.2 L10.8 10.8 M10.8 5.2 L5.2 10.8" fill="none" stroke="#f2f2f2" stroke-linecap="round" stroke-linejoin="round" stroke-width="1.1"/></svg>
<div class="abs" style="left:33.8px;top:404.4px;width:78.2px;height:41.6px;border-radius:4px;background:#232323;box-shadow:0 1px 4px rgba(0,0,0,.35);overflow:hidden;"><div style="position:absolute;left:0;top:3.7px;width:100%;height:17.3px;background:#2d6de0;"></div></div>
<span class="t" style="left:42.7px;top:412px;font-size:8.36px;color:#f4f4f4;">PNG (Default)</span>
<span class="t" style="left:42.7px;top:429.4px;font-size:8.36px;color:#dadada;">PDF</span>
</body>
</html>
